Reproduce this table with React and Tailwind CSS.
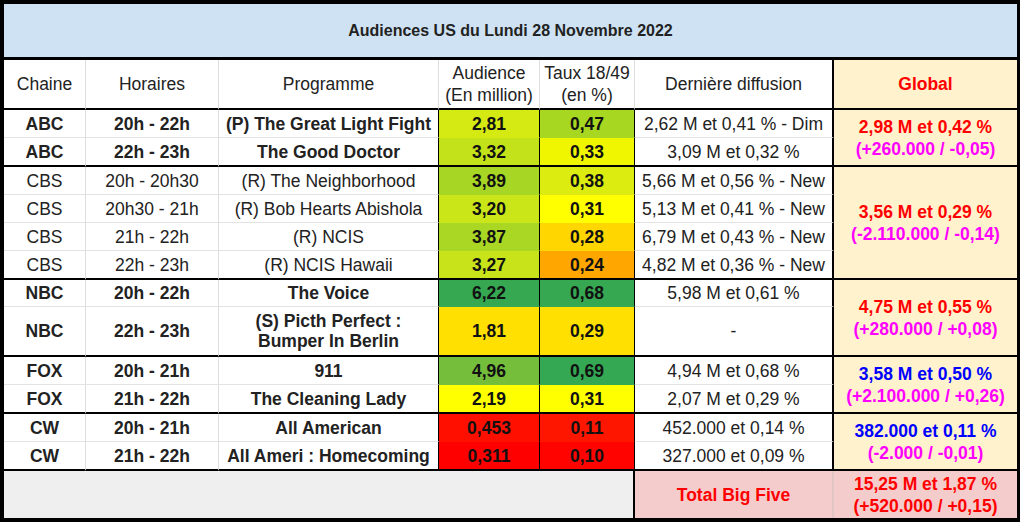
import React from "react";

const groups = [
  {
    bold: true,
    g1: "2,98 M et 0,42 %",
    g2: "(+260.000 / -0,05)",
    g1c: "text-[#ff0000]",
    span: "row-span-2",
    rows: [
      { ch: "ABC", h: "20h - 22h", p: ["(P) The Great Light Fight"], a: "2,81", ac: "bg-[#d5e913]", t: "0,47", tc: "bg-[#a8d722]", d: "2,62 M et 0,41 % - Dim" },
      { ch: "ABC", h: "22h - 23h", p: ["The Good Doctor"], a: "3,32", ac: "bg-[#c4e21a]", t: "0,33", tc: "bg-[#f0f600]", d: "3,09 M et 0,32 %" },
    ],
  },
  {
    bold: false,
    g1: "3,56 M et 0,29 %",
    g2: "(-2.110.000 / -0,14)",
    g1c: "text-[#ff0000]",
    span: "row-span-4",
    rows: [
      { ch: "CBS", h: "20h - 20h30", p: ["(R) The Neighborhood"], a: "3,89", ac: "bg-[#a8d624]", t: "0,38", tc: "bg-[#dcec10]", d: "5,66 M et 0,56 % - New" },
      { ch: "CBS", h: "20h30 - 21h", p: ["(R) Bob Hearts Abishola"], a: "3,20", ac: "bg-[#cae518]", t: "0,31", tc: "bg-[#ffff00]", d: "5,13 M et 0,41 % - New" },
      { ch: "CBS", h: "21h - 22h", p: ["(R) NCIS"], a: "3,87", ac: "bg-[#a9d723]", t: "0,28", tc: "bg-[#ffd600]", d: "6,79 M et 0,43 % - New" },
      { ch: "CBS", h: "22h - 23h", p: ["(R) NCIS Hawaii"], a: "3,27", ac: "bg-[#c8e319]", t: "0,24", tc: "bg-[#ffa700]", d: "4,82 M et 0,36 % - New" },
    ],
  },
  {
    bold: true,
    g1: "4,75 M et 0,55 %",
    g2: "(+280.000 / +0,08)",
    g1c: "text-[#ff0000]",
    span: "row-span-2",
    rows: [
      { ch: "NBC", h: "20h - 22h", p: ["The Voice"], a: "6,22", ac: "bg-[#36a852]", t: "0,68", tc: "bg-[#36a852]", d: "5,98 M et 0,61 %" },
      { ch: "NBC", h: "22h - 23h", p: ["(S) Picth Perfect :", "Bumper In Berlin"], a: "1,81", ac: "bg-[#ffe000]", t: "0,29", tc: "bg-[#ffe000]", d: "-" },
    ],
  },
  {
    bold: true,
    g1: "3,58 M et 0,50 %",
    g2: "(+2.100.000 / +0,26)",
    g1c: "text-[#0000ff]",
    span: "row-span-2",
    rows: [
      { ch: "FOX", h: "20h - 21h", p: ["911"], a: "4,96", ac: "bg-[#74be3c]", t: "0,69", tc: "bg-[#34a853]", d: "4,94 M et 0,68 %" },
      { ch: "FOX", h: "21h - 22h", p: ["The Cleaning Lady"], a: "2,19", ac: "bg-[#ffff00]", t: "0,31", tc: "bg-[#ffff00]", d: "2,07 M et 0,29 %" },
    ],
  },
  {
    bold: true,
    g1: "382.000 et 0,11 %",
    g2: "(-2.000 / -0,01)",
    g1c: "text-[#0000ff]",
    span: "row-span-2",
    rows: [
      { ch: "CW", h: "20h - 21h", p: ["All American"], a: "0,453", ac: "bg-[#ff0f00]", t: "0,11", tc: "bg-[#ff1600]", d: "452.000 et 0,14 %" },
      { ch: "CW", h: "21h - 22h", p: ["All Ameri : Homecoming"], a: "0,311", ac: "bg-[#ff0000]", t: "0,10", tc: "bg-[#ff0300]", d: "327.000 et 0,09 %" },
    ],
  },
];

const C = "flex flex-col items-center justify-center text-center whitespace-nowrap";
const GRAYR = "border-r border-r-[#dedede]";

export default function App() {
  const cells = [];
  groups.forEach((g, gi) => {
    g.rows.forEach((r, ri) => {
      const last = ri === g.rows.length - 1;
      const bb = last ? "border-b-2 border-b-black" : "border-b border-b-[#e3e3e3]";
      const bbc = last ? "border-b-2 border-b-black" : "border-b border-b-transparent";
      const fw = g.bold ? "font-bold" : "font-normal";
      const k = `${gi}-${ri}`;
      cells.push(
        <div key={k + "c"} className={`${C} ${bb} ${GRAYR} ${fw} bg-white`}>{r.ch}</div>,
        <div key={k + "h"} className={`${C} ${bb} ${GRAYR} ${fw} bg-white`}>{r.h}</div>,
        <div key={k + "p"} className={`${C} ${bb} border-r border-r-black ${fw} bg-white`}>
          {r.p.map((l) => (
            <span key={l}>{l}</span>
          ))}
        </div>,
        <div key={k + "a"} className={`${C} ${bbc} border-r border-r-black font-bold text-[#111] ${r.ac}`}>{r.a}</div>,
        <div key={k + "t"} className={`${C} ${bbc} border-r border-r-black font-bold text-[#111] ${r.tc}`}>{r.t}</div>,
        <div key={k + "d"} className={`${C} ${bb} border-r-2 border-r-black bg-white`}>{r.d}</div>
      );
      if (ri === 0) {
        cells.push(
          <div key={k + "g"} className={`${C} ${g.span} border-b-2 border-b-black bg-[#fff2cc] font-bold leading-[22px]`}>
            <span className={g.g1c}>{g.g1}</span>
            <span className="text-[#ff00ff]">{g.g2}</span>
          </div>
        );
      }
    });
  });

  return (
    <div className="w-[1022px] h-[525px] bg-white">
      <div className="w-[1020px] border-l-4 border-t-4 border-r-[3px] border-b-4 border-black font-['Liberation_Sans',Arial,sans-serif] text-[17.5px] leading-[20px] text-[#222]">
        <div className="h-[56px] border-b-[3px] border-b-black bg-[#cfe2f3] flex items-center justify-center text-[16px] font-bold text-[#222]">
          Audiences US du Lundi 28 Novembre 2022
        </div>
        <div className="grid grid-cols-[82px_133px_220px_101px_95px_199px_183px] grid-rows-[50px_28px_29px_28px_28px_28px_29px_27px_50px_28px_29px_28px_29px_47px]">
          <div className={`${C} border-b-2 border-b-black ${GRAYR}`}>Chaine</div>
          <div className={`${C} border-b-2 border-b-black ${GRAYR}`}>Horaires</div>
          <div className={`${C} border-b-2 border-b-black ${GRAYR}`}>Programme</div>
          <div className={`${C} border-b-2 border-b-black ${GRAYR} leading-[22px]`}>
            <span>Audience</span>
            <span>(En million)</span>
          </div>
          <div className={`${C} border-b-2 border-b-black ${GRAYR} leading-[22px]`}>
            <span>Taux 18/49</span>
            <span>(en %)</span>
          </div>
          <div className={`${C} border-b-2 border-b-black border-r-2 border-r-black`}>Dernière diffusion</div>
          <div className={`${C} border-b-2 border-b-black bg-[#fff2cc] font-bold text-[#ff0000]`}>Global</div>
          {cells}
          <div className="col-span-5 bg-[#efefef] border-r-2 border-r-black"></div>
          <div className={`${C} bg-[#f4cccc] border-r-2 border-r-[#e2c6c6] font-bold text-[#ff0000]`}>Total Big Five</div>
          <div className={`${C} bg-[#f4cccc] font-bold text-[#ff0000] leading-[22px]`}>
            <span>15,25 M et 1,87 %</span>
            <span>(+520.000 / +0,15)</span>
          </div>
        </div>
      </div>
    </div>
  );
}
